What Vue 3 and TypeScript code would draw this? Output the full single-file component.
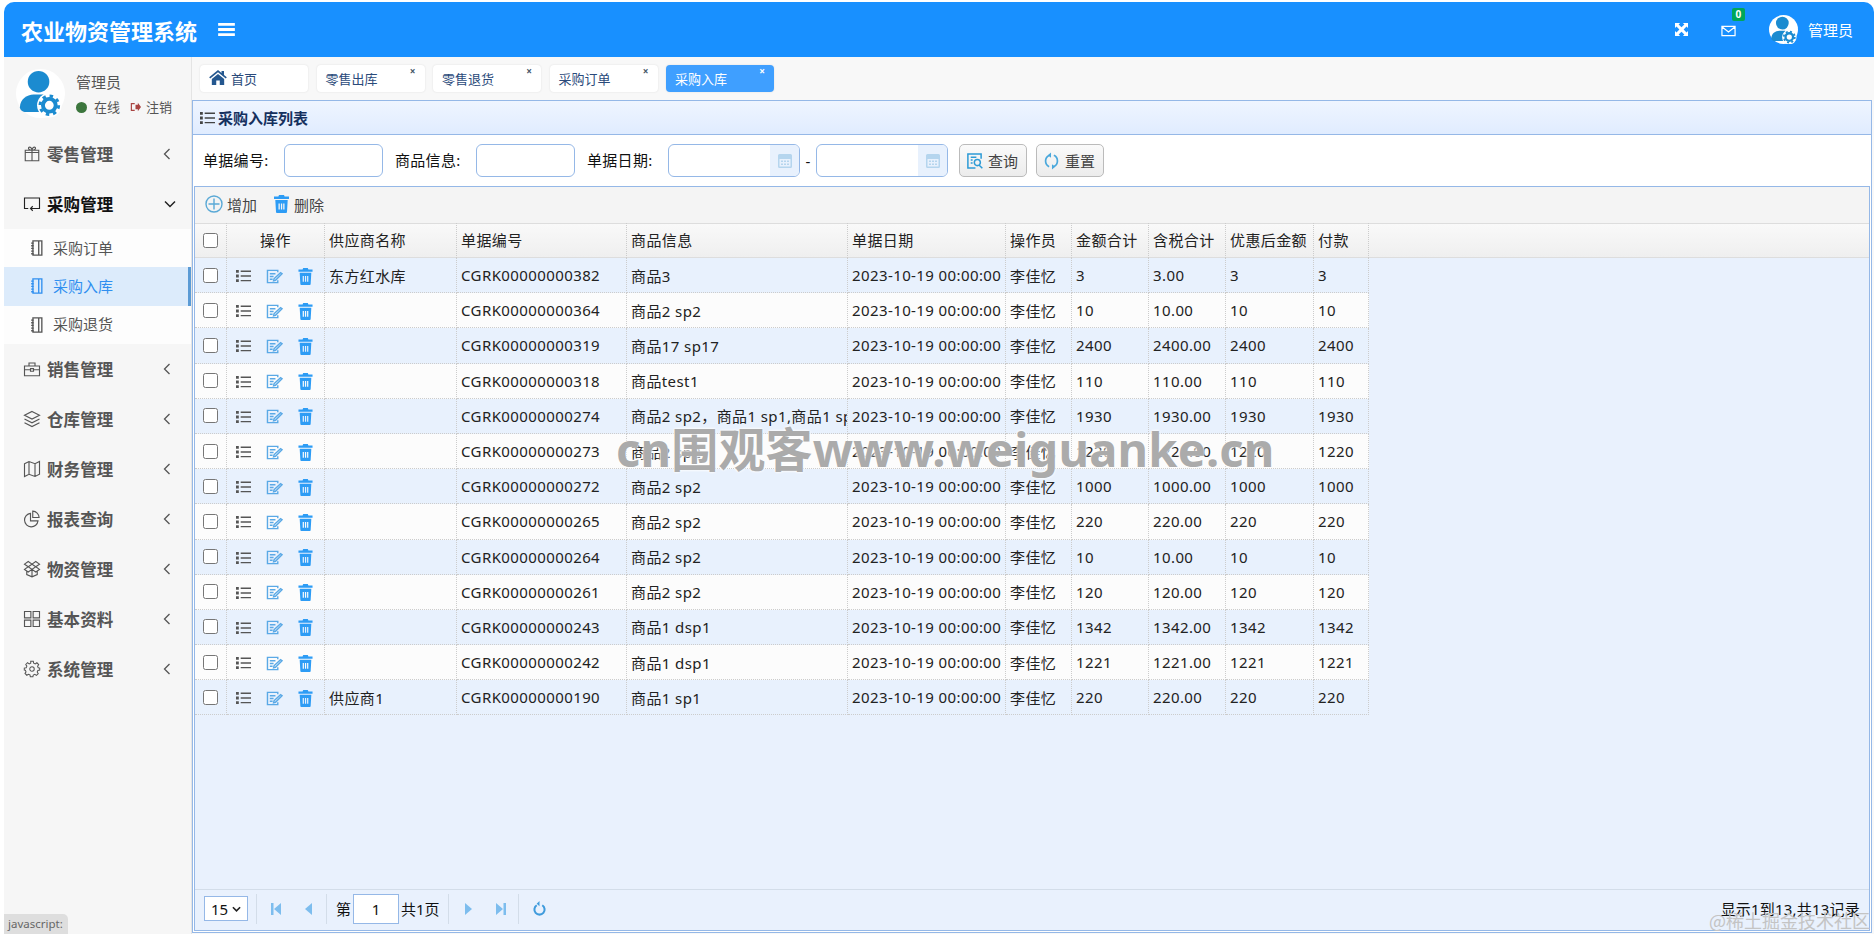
<script setup lang="ts">
import { h } from 'vue'

type IconDef = { vb?: string; s?: string[]; f?: string[]; w?: number }
const icons: Record<string, IconDef> = {
  bars: { vb: '0 0 18 14', f: ['M0 0h18v3H0zM0 5.500h18v3H0zM0 11h18v3H0z'] },
  expand: { vb: '0 0 14 14', f: ['M0 0h5.500L3.900 1.600 7 4.700 10.100 1.600 8.500 0H14v5.500l-1.600-1.600L9.300 7l3.100 3.100L14 8.500V14H8.500l1.600-1.600L7 9.300l-3.100 3.100L5.500 14H0V8.500l1.600 1.600L4.700 7 1.600 3.900 0 5.500z'] },
  mail: { vb: '0 0 16 12', s: ['M1 1h14v10H1zM1 1.500l7 5.500 7-5.500'], w: 1.300 },
  home: { vb: '0 0 20 17', f: ['M10 0l4 3.300V1h2.800v4.600L20 8.300l-1.200 1.400L10 2.500 1.200 9.700 0 8.300zM3 10.200L10 4.400l7 5.800V17h-5v-5H8v5H3z'] },
  gift: { s: ['M3 10h18v11H3zM3 10V7h18v3M12 7v14M12 7C9 7 6.500 5.500 7.500 3.500 9 1.500 12 4 12 7zM12 7c3 0 5.500-1.500 4.500-3.500C15 1.500 12 4 12 7z'] },
  screen: { s: ['M7 18H2V4h20v14h-9M13 15l-3 3 3 3M10 18h6'] },
  book: { vb: '0 0 14 18', s: ['M3 1h10v16H3zM9.500 1v16M1 3.500h3M1 6.500h3M1 9.500h3M1 12.500h3M1 15.500h3'] },
  case: { s: ['M2 8h20v13H2zM8 8V4h8v4M2 13h8M14 13h8M10 11.500h4v3.500h-4z'] },
  layers: { s: ['M12 2l10 5-10 5L2 7zM2 12l10 5 10-5M2 17l10 5 10-5'] },
  map: { s: ['M2 5l6-3 8 3 6-3v17l-6 3-8-3-6 3zM8 2v17M16 5v17'] },
  pie: { s: ['M10 4.500a9 9 0 1 0 10 10H10zM13 1.500v8.500h8.500a9 9 0 0 0-8.500-8.500z'] },
  box: { s: ['M7 2l5 3.500L7 9 2 5.500zM17 2l-5 3.500L17 9l5-3.500zM7 9l5 3.500L17 9M2 5.500 7 9l-5 3.500 5 3.500 5-3.500 5 3.500 5-3.500L17 9M5 15v4.500l7 3 7-3V15M12 12.500v10'] },
  grid: { s: ['M2 2h8.500v8.500H2zM13.500 2H22v8.500h-8.500zM2 13.500h8.500V22H2zM13.500 13.500H22V22h-8.500z'] },
  gear: { vb: '-1 0 26 28', s: ['M12 10.500a3.500 3.500 0 1 0 0 7 3.500 3.500 0 0 0 0-7zM10 2h4l.6 3 2.400 1 2.600-1.700 2.800 2.800L20.700 9.700l1 2.300 2.300.6v3l-2.900.7-1 2.400 1.600 2.500-2.800 2.800-2.500-1.600-2.400 1-.6 2.600h-4l-.6-2.900-2.400-1-2.500 1.600-2.800-2.800 1.600-2.500-1-2.400L0 15.600v-3l3-.6 1-2.400-1.700-2.600 2.800-2.800L7.600 6l2.400-1z'], w: 1.600 },
  chevL: { vb: '0 0 8 12', s: ['M6.500 1L1.500 6l5 5'], w: 1.300 },
  chevD: { vb: '0 0 12 8', s: ['M1 1.500l5 5 5-5'], w: 1.500 },
  list: { vb: '0 0 16 14', f: ['M0 .5h3v3H0zM0 5.500h3v3H0zM0 10.500h3v3H0zM5 1.200h11v1.500H5zM5 6.200h11v1.500H5zM5 11.200h11v1.500H5z'] },
  edit: { vb: '0 0 18 16', s: ['M12.500 3.500v-2h-11v13h11V12M4 5h6M4 8h4M4 11h3M8.500 10.500l7-6.500 1.500 1-7 7-2 .5z'], w: 1.500 },
  trash: { vb: '0 0 16 18', f: ['M5.500 0h5l.6 1.500H15.500V4H.5V1.500h4.400zM1.800 5h12.400l-.7 12a1 1 0 0 1-1 1H3.500a1 1 0 0 1-1-1zM5 8.500v6h1.300v-6zM7.400 8.500v6h1.300v-6zM9.700 8.500v6H11v-6z'] },
  plus: { vb: '0 0 18 18', s: ['M9 1a8 8 0 1 0 0 16A8 8 0 0 0 9 1zM9 3.500v11M3.500 9h11'], w: 1.400 },
  search: { vb: '0 0 18 18', s: ['M16 6.500V1.500H2v15h8M5 5h6M5 8h2M5 11h2M12 7.500a3.200 3.200 0 1 0 0 6.400 3.200 3.200 0 0 0 0-6.400zM14.300 13.700l3 3'], w: 1.600 },
  reload: { vb: '0 0 18 18', s: ['M6.500 3.200A6.500 6.500 0 0 0 6.500 15M11.500 14.800A6.500 6.500 0 0 0 11.500 3'], f: ['M8.500 0v5.500L5 3zM9.500 18v-5.500L13 15z'], w: 1.800 },
  cal: { vb: '0 0 16 16', f: ['M2.500 1h11A1.500 1.500 0 0 1 15 2.500v11a1.500 1.500 0 0 1-1.500 1.500h-11A1.500 1.500 0 0 1 1 13.500v-11A1.500 1.500 0 0 1 2.500 1zM2.500 6v7.500h11V6zM4 7.500h2v1.500H4zM7 7.500h2v1.500H7zM10 7.500h2v1.500h-2zM4 10.500h2V12H4zM7 10.500h2V12H7zM10 10.500h2V12h-2z'] },
  first: { vb: '0 0 12 14', f: ['M1 1h2.500v12H1zM11 1v12L4 7z'] },
  prev: { vb: '0 0 12 14', f: ['M9 1v12L2 7z'] },
  next: { vb: '0 0 12 14', f: ['M3 1v12l7-6z'] },
  last: { vb: '0 0 12 14', f: ['M1 1v12l7-6zM8.500 1H11v12H8.500z'] },
  refresh: { vb: '0 0 14 16', s: ['M4 4.500a5.500 5.500 0 1 0 6 0'], f: ['M7 0v5.500L4 3z'], w: 2.200 },
  logout: { vb: '0 0 14 12', f: ['M1 1h5v1.500H2.500v7H6V11H1zM7 3h3V.5L14 6l-4 5.500V9H7z'] },
}

const Ic = (props: { name: string }) => {
  const d = icons[props.name]
  return h('svg', { viewBox: d.vb || '0 0 24 24' }, [
    ...(d.f || []).map((p) => h('path', { d: p, fill: 'currentColor', 'fill-rule': 'evenodd' })),
    ...(d.s || []).map((p) => h('path', { d: p, fill: 'none', stroke: 'currentColor', 'stroke-width': d.w || 1.5 })),
  ])
}
Ic.props = ['name']

const menus = [
  { t: '零售管理', i: 'gift' },
  { t: '采购管理', i: 'screen', open: true },
  { t: '销售管理', i: 'case' },
  { t: '仓库管理', i: 'layers' },
  { t: '财务管理', i: 'map' },
  { t: '报表查询', i: 'pie' },
  { t: '物资管理', i: 'box' },
  { t: '基本资料', i: 'grid' },
  { t: '系统管理', i: 'gear' },
]
const subs = [
  { t: '采购订单', active: false },
  { t: '采购入库', active: true },
  { t: '采购退货', active: false },
]
const tabs = [
  { t: '首页', home: true },
  { t: '零售出库' },
  { t: '零售退货' },
  { t: '采购订单' },
  { t: '采购入库', active: true },
]
const cols = [
  { t: '', w: 32 }, { t: '操作', w: 98 }, { t: '供应商名称', w: 132 }, { t: '单据编号', w: 170 },
  { t: '商品信息', w: 221 }, { t: '单据日期', w: 158 }, { t: '操作员', w: 66 }, { t: '金额合计', w: 77 },
  { t: '含税合计', w: 77 }, { t: '优惠后金额', w: 88 }, { t: '付款', w: 55 },
]
const rows = [
  ['东方红水库', '382', '商品3', '3', '3.00'],
  ['', '364', '商品2 sp2', '10', '10.00'],
  ['', '319', '商品17 sp17', '2400', '2400.00'],
  ['', '318', '商品test1', '110', '110.00'],
  ['', '274', '商品2 sp2，商品1 sp1,商品1 sp1', '1930', '1930.00'],
  ['', '273', '商品2 sp2', '1220', '1220.00'],
  ['', '272', '商品2 sp2', '1000', '1000.00'],
  ['', '265', '商品2 sp2', '220', '220.00'],
  ['', '264', '商品2 sp2', '10', '10.00'],
  ['', '261', '商品2 sp2', '120', '120.00'],
  ['', '243', '商品1 dsp1', '1342', '1342.00'],
  ['', '242', '商品1 dsp1', '1221', '1221.00'],
  ['供应商1', '190', '商品1 sp1', '220', '220.00'],
]
</script>

<template>
  <div class="shell">
    <header class="topbar">
      <div class="brand">农业物资管理系统</div>
      <Ic name="bars" class="bars" />
      <div class="top-right">
        <Ic name="expand" class="expand" />
        <div class="mail">
          <Ic name="mail" class="mail-ic" />
          <span class="badge">0</span>
        </div>
        <svg class="avatar small" viewBox="0 0 50 50">
          <circle cx="25" cy="25" r="25" fill="#fff" />
          <circle cx="23" cy="14" r="11" fill="#1b8bd0" />
          <path d="M4 40c0-8 7-13 14-13h10v18H10c-3 0-6-2-6-5z" fill="#1b8bd0" />
          <circle cx="35" cy="38" r="12.500" fill="#fff" />
          <circle cx="35" cy="38" r="6.500" fill="none" stroke="#1b8bd0" stroke-width="4" />
          <circle cx="35" cy="38" r="9.500" fill="none" stroke="#1b8bd0" stroke-width="3" stroke-dasharray="3.500 3.960" />
        </svg>
        <span class="top-user">管理员</span>
      </div>
    </header>

    <div class="body">
      <aside class="side">
        <div class="user">
          <svg class="avatar" viewBox="0 0 50 50">
            <circle cx="25" cy="25" r="25" fill="#fff" />
            <circle cx="23" cy="13" r="11" fill="#1b8bd0" />
            <path d="M4 39c0-8 7-13 14-13h10v18H10c-3 0-6-2-6-5z" fill="#1b8bd0" />
            <circle cx="34" cy="37" r="12.500" fill="#fff" />
            <circle cx="34" cy="37" r="6.500" fill="none" stroke="#1b8bd0" stroke-width="4" />
            <circle cx="34" cy="37" r="9.500" fill="none" stroke="#1b8bd0" stroke-width="3" stroke-dasharray="3.500 3.960" />
          </svg>
          <div class="user-info">
            <div class="user-name">管理员</div>
            <div class="user-status">
              <i class="dot"></i><span>在线</span>
              <Ic name="logout" class="logout" /><span>注销</span>
            </div>
          </div>
        </div>
        <nav>
          <template v-for="m in menus" :key="m.t">
            <div class="menu" :class="{ open: m.open }">
              <Ic :name="m.i" class="menu-ic" />
              <span class="menu-t">{{ m.t }}</span>
              <Ic :name="m.open ? 'chevD' : 'chevL'" :class="m.open ? 'chev-d' : 'chev-l'" />
            </div>
            <div v-if="m.open" class="subs">
              <div v-for="s in subs" :key="s.t" class="sub" :class="{ active: s.active }">
                <Ic name="book" class="sub-ic" />
                <span class="sub-t">{{ s.t }}</span>
              </div>
            </div>
          </template>
        </nav>
      </aside>

      <main class="main">
        <div class="tabs">
          <div v-for="t in tabs" :key="t.t" class="tab" :class="{ active: t.active }">
            <Ic v-if="t.home" name="home" class="home" />
            <span>{{ t.t }}</span>
            <b v-if="!t.home" class="x">×</b>
          </div>
        </div>

        <section class="panel">
          <div class="panel-title">
            <Ic name="list" class="title-ic" />
            <span>采购入库列表</span>
          </div>
          <div class="search">
            <label>单据编号:</label><div class="inp"></div>
            <label>商品信息:</label><div class="inp"></div>
            <label>单据日期:</label>
            <div class="date"><span class="cal"><Ic name="cal" /></span></div>
            <span class="dash">-</span>
            <div class="date"><span class="cal"><Ic name="cal" /></span></div>
            <button class="btn"><Ic name="search" class="btn-ic s" />查询</button>
            <button class="btn"><Ic name="reload" class="btn-ic r" />重置</button>
          </div>
          <div class="grid">
            <div class="toolbar">
              <span class="tool"><Ic name="plus" class="plus" />增加</span>
              <span class="tool"><Ic name="trash" class="tool-trash" />删除</span>
            </div>
            <div class="table-wrap">
              <table>
                <colgroup><col v-for="c in cols" :key="c.t" :style="{ width: c.w + 'px' }" /></colgroup>
                <thead>
                  <tr>
                    <th class="ck"><input type="checkbox" /></th>
                    <th v-for="(c, i) in cols.slice(1)" :key="c.t" :class="{ center: i === 0 }"><div class="c">{{ c.t }}</div></th>
                  </tr>
                </thead>
                <tbody>
                  <tr v-for="r in rows" :key="r[1]">
                    <td class="ck"><input type="checkbox" /></td>
                    <td class="acts">
                      <div class="act-row">
                        <Ic name="list" class="a-list" />
                        <Ic name="edit" class="a-edit" />
                        <Ic name="trash" class="a-trash" />
                      </div>
                    </td>
                    <td><div class="c">{{ r[0] }}</div></td>
                    <td><div class="c">CGRK00000000{{ r[1] }}</div></td>
                    <td><div class="c">{{ r[2] }}</div></td>
                    <td><div class="c">2023-10-19 00:00:00</div></td>
                    <td><div class="c">李佳忆</div></td>
                    <td><div class="c">{{ r[3] }}</div></td>
                    <td><div class="c">{{ r[4] }}</div></td>
                    <td><div class="c">{{ r[3] }}</div></td>
                    <td><div class="c">{{ r[3] }}</div></td>
                  </tr>
                </tbody>
              </table>
            </div>
            <div class="pager">
              <div class="psel">15<svg viewBox="0 0 10 6"><path d="M1 1l4 4 4-4" fill="none" stroke="#222" stroke-width="1.800" /></svg></div>
              <i class="sep"></i>
              <Ic name="first" class="pg p1" />
              <Ic name="prev" class="pg p2" />
              <i class="sep"></i>
              <span>第</span>
              <div class="pinp">1</div>
              <span>共1页</span>
              <i class="sep"></i>
              <Ic name="next" class="pg p1" />
              <Ic name="last" class="pg p2" />
              <i class="sep"></i>
              <Ic name="refresh" class="pg-r" />
              <span class="pinfo">显示1到13,共13记录</span>
            </div>
          </div>
        </section>
      </main>
    </div>

    <div class="status">javascript:</div>
    <div class="wm-big">cn围观客www.weiguanke.cn</div>
    <div class="wm-small">@稀土掘金技术社区</div>
  </div>
</template>

<style>
html, body { margin: 0; background: #fff; overflow: hidden; }
</style>

<style scoped>
.shell {
  position: relative; height: 938px; box-sizing: border-box; padding: 2px 2px 4px 4px;
  display: flex; flex-direction: column; overflow: hidden;
  font-family: "Noto Sans", "Noto Sans CJK SC", sans-serif; font-size: 15px; letter-spacing: .4px; color: #222;
}
svg { display: block; flex: none; }
.topbar {
  height: 55px; flex: none; background: #1890ff; color: #fff; border-radius: 10px 10px 0 0;
  display: flex; align-items: center; padding-left: 17px; letter-spacing: 0;
}
.brand { font-size: 22px; font-weight: 700; width: 197px; }
.bars { width: 17px; height: 13px; }
.top-right { margin-left: auto; display: flex; align-items: center; }
.expand { width: 13px; height: 13px; margin-right: 33px; }
.mail { position: relative; margin-right: 33px; }
.mail-ic { width: 15px; height: 12px; margin-top: 3px; }
.badge {
  position: absolute; left: 11px; top: -14px; width: 13px; height: 13px; background: #00a65a;
  font-size: 10px; font-weight: 700; line-height: 13px; text-align: center; border-radius: 2px;
}
.avatar { width: 49px; height: 49px; }
.avatar.small { width: 29px; height: 29px; }
.top-user { font-size: 15px; margin: 0 21px 0 10px; }

.body { flex: 1; display: flex; min-height: 0; }
.side { width: 187px; flex: none; background: #f6f6f6; border-right: 1px solid #e4e4e4; letter-spacing: 0; }
.user { height: 72px; display: flex; align-items: center; padding-left: 12px; box-sizing: border-box; }
.user-info { margin-left: 11px; margin-top: 2px; color: #555; }
.user-name { font-size: 15px; line-height: 20px; }
.user-status { display: flex; align-items: center; font-size: 13px; margin-top: 6px; line-height: 18px; white-space: nowrap; }
.dot { width: 11px; height: 11px; border-radius: 50%; background: #3c763d; margin-right: 7px; }
.logout { width: 11px; height: 10px; color: #a94442; margin: 0 5px 0 10px; }

.menu { height: 50px; display: flex; align-items: center; padding-left: 19px; color: #555; position: relative; }
.menu.open { color: #111; }
.menu-ic { width: 18px; height: 18px; color: #555; margin-right: 6px; }
.menu.open .menu-ic { color: #222; }
.menu-t { font-size: 16.500px; font-weight: 700; letter-spacing: .1px; }
.chev-l { position: absolute; left: 159px; width: 8px; height: 12px; color: #555; }
.chev-d { position: absolute; left: 160px; width: 12px; height: 8px; color: #222; }
.subs { background: #fdfdfd; }
.sub { height: 38.300px; display: flex; align-items: center; padding-left: 26px; color: #555; position: relative; }
.sub-ic { width: 13px; height: 16px; margin-right: 10px; }
.sub-t { font-size: 15px; margin-top: -2px; }
.sub.active { background: #dcebfb; color: #2f8ff0; }
.sub.active::after { content: ""; position: absolute; right: 0; top: 0; bottom: 0; width: 3px; background: #5b9bd5; }

.main { flex: 1; min-width: 0; display: flex; flex-direction: column; padding: 0 2px 1px 0; background: #f8f8f8; }
.tabs { height: 43px; flex: none; display: flex; align-items: flex-start; gap: 8.500px; padding: 8px 0 0 8px; box-sizing: border-box; letter-spacing: 0; }
.tab {
  width: 108px; height: 27px; box-sizing: border-box; background: #fff; border-radius: 4px; position: relative;
  display: flex; align-items: center; padding-left: 9px; font-size: 13px; color: #2a4a7a; box-shadow: 0 0 2px #ddd;
}
.tab.active { background: #3f9fff; color: #fff; }
.home { width: 18px; height: 15px; color: #24578f; margin: -2px 4px 0 0; }
.x { position: absolute; right: 9px; top: 0; font-size: 10px; line-height: 12px; color: #456; }
.tab.active .x { color: #fff; }

.panel { flex: 1; min-height: 0; display: flex; flex-direction: column; border: 1px solid #95b8e7; box-sizing: border-box; background: #fff; }
.panel-title {
  height: 33px; flex: none; display: flex; align-items: center; padding-left: 7px; gap: 3px;
  background: linear-gradient(#eff5ff, #e0ecff); border-bottom: 1px solid #95b8e7;
  font-size: 15px; font-weight: 700; color: #15305e; letter-spacing: 0;
}
.title-ic { width: 15px; height: 14px; color: #444; }
.search { height: 51px; flex: none; display: flex; align-items: center; padding-left: 10px; color: #111; box-sizing: border-box; letter-spacing: .3px; }
.search label { width: 81px; flex: none; margin-top: -2px; }
.inp, .date { height: 33px; box-sizing: border-box; border: 1px solid #95b8e7; border-radius: 6px; background: #fff; flex: none; }
.inp { width: 99px; margin-right: 12px; }
.date { width: 132px; display: flex; justify-content: flex-end; overflow: hidden; }
.cal { width: 29px; background: #e8f1fd; display: flex; align-items: center; justify-content: center; color: #b5d5ee; }
.cal svg { width: 16px; height: 16px; }
.dash { width: 16px; text-align: center; }
.btn {
  width: 68px; height: 33px; margin-left: 9px; padding: 0 0 0 6px; border: 1px solid #bbb; border-radius: 5px;
  background: linear-gradient(#fafafa, #ececec); display: flex; align-items: center; font: inherit; color: #444; letter-spacing: 0;
}
.date + .btn { margin-left: 11px; }
.btn-ic { width: 17px; height: 18px; margin-right: 5px; }
.btn-ic.s { color: #2d9bd6; }
.btn-ic.r { color: #4aa8dc; }

.grid { flex: 1; min-height: 0; margin: 0 1px 1px; border: 1px solid #95b8e7; display: flex; flex-direction: column; background: #e9f1fd; box-sizing: border-box; }
.toolbar { height: 36px; flex: none; display: flex; align-items: center; background: #f4f4f4; padding-left: 10px; gap: 16px; color: #444; letter-spacing: 0; }
.tool { display: flex; align-items: center; gap: 4px; margin-top: -2px; }
.plus { width: 18px; height: 18px; color: #5aa9d6; }
.tool-trash { width: 17px; height: 18px; color: #2d9cf5; }
.table-wrap { flex: 1; min-height: 0; overflow: hidden; position: relative; }
.table-wrap::before {
  content: ""; position: absolute; left: 0; right: 0; top: 0; height: 35px;
  background: linear-gradient(#f9f9f9, #efefef); border-top: 1px solid #ddd; border-bottom: 1px solid #ddd; box-sizing: border-box;
}
table { table-layout: fixed; border-collapse: separate; border-spacing: 0; width: 1174px; position: relative; }
th, td { box-sizing: border-box; padding: 0; border-right: 1px dotted #ccc; border-bottom: 1px dotted #ccc; font-weight: 400; text-align: left; overflow: hidden; }
th { height: 35px; border-bottom: none; color: #222; }
td { height: 35.200px; }
tbody tr:nth-child(odd) { background: #e8f1fd; }
tbody tr:nth-child(even) { background: #fcfcfc; }
.c { padding: 0 4px; white-space: nowrap; overflow: hidden; }
th .c { margin-top: -2px; }
th.center .c { text-align: center; }
.ck { text-align: center; }
.ck input { width: 15px; height: 15px; margin: 4px 0 0; }
.act-row { display: flex; align-items: center; padding: 2px 0 0 9px; }
.a-list { width: 15px; height: 14px; color: #555; margin-right: 15px; }
.a-edit { width: 17px; height: 15px; color: #5aa9e6; margin-right: 15px; }
.a-trash { width: 15px; height: 17px; color: #2d9cf5; }

.pager { height: 41px; flex: none; box-sizing: border-box; border-top: 1px solid #d3dde9; display: flex; align-items: center; padding: 0 9px 3px; color: #111; letter-spacing: 0; }
.psel { width: 44px; height: 25px; box-sizing: border-box; border: 1px solid #95b8e7; background: #fff; display: flex; align-items: center; padding-left: 6px; gap: 4px; }
.psel svg { width: 9px; height: 6px; }
.sep { width: 1px; height: 30px; background: #d3dde9; margin: 0 9px 0 8px; }
.pg { width: 12px; height: 14px; color: #7dbdee; }
.p1 { margin: 0 0 0 4px; }
.p2 { margin: 0 3px 0 21px; }
.pinp { width: 46px; height: 30px; box-sizing: border-box; border: 1px solid #95b8e7; background: #fff; text-align: center; line-height: 28px; margin: 0 2px; }
.pg-r { width: 13px; height: 15px; color: #3f9bdc; margin-left: 5px; }
.pinfo { margin-left: auto; letter-spacing: .2px; }

.status {
  position: absolute; left: 4px; bottom: 4px; width: 64px; height: 20px; background: #dedede; color: #666; font-size: 11.500px;
  line-height: 20px; padding-left: 4px; box-sizing: border-box; border-radius: 0 5px 0 0; letter-spacing: 0;
}
.wm-big {
  position: absolute; left: 616px; top: 422px; font-size: 47px; font-weight: 700; line-height: 54px; color: #ababab; letter-spacing: .2px;
  font-family: "Noto Sans", "Noto Sans CJK SC", sans-serif; white-space: nowrap; pointer-events: none;
  text-shadow: 0 0 3px #fff, 0 0 3px #fff;
}
.wm-small { position: absolute; right: 6px; bottom: 7px; font-size: 18px; color: #c4c4c4; white-space: nowrap; font-family: "Noto Sans CJK SC", sans-serif; line-height: 22px; letter-spacing: 0; }
</style>
